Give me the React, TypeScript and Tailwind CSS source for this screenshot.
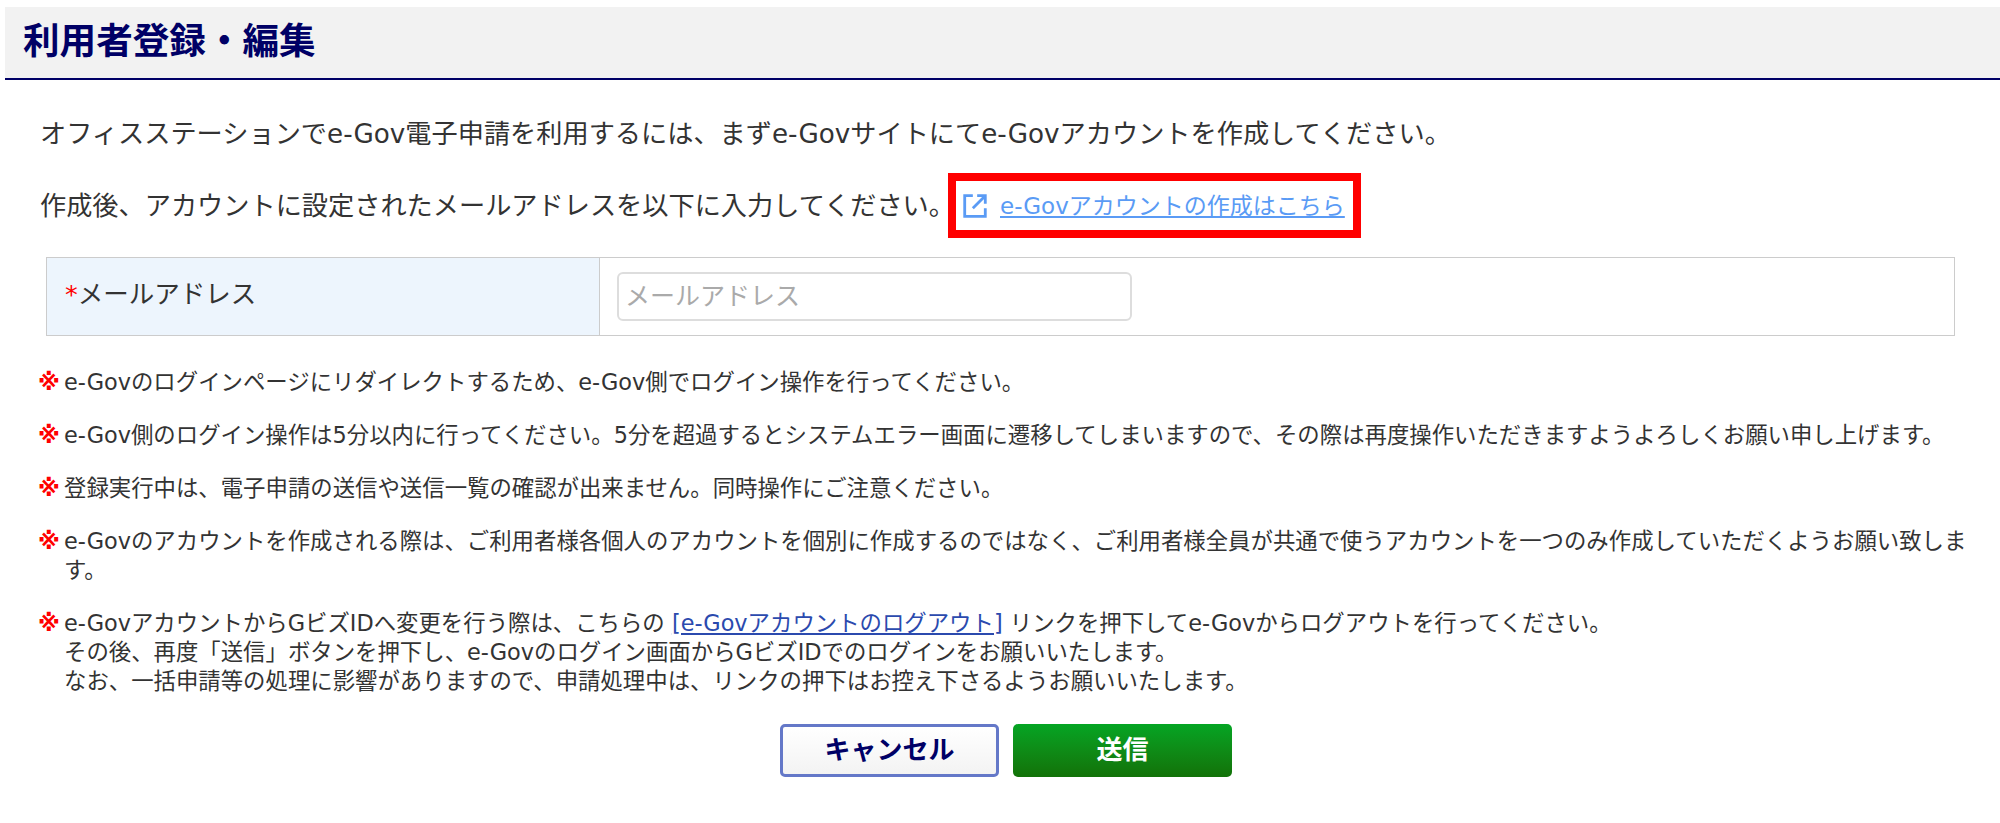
function Note({ children }: { children: React.ReactNode }) {
  return (
    <div className="flex text-[22.4px] leading-[29px] text-[#333]">
      <span className="w-[26px] shrink-0 font-bold text-[#f00]">※</span>
      <div>{children}</div>
    </div>
  );
}

export default function App() {
  return (
    <div className="min-h-[823px] bg-white pl-[5px] pt-[7px] font-['DejaVu_Sans','Noto_Sans_CJK_JP',sans-serif] text-[#333]">
      <div className="flex h-[73px] items-center border-b-2 border-[#000066] bg-[#f2f2f2] pl-[18px]">
        <h1 className="text-[36.6px] font-bold leading-none text-[#000066]">利用者登録・編集</h1>
      </div>
      <div className="pl-[35px] pt-[35px] text-[26.2px] leading-[38px]">
        <p>オフィスステーションでe-Gov電子申請を利用するには、まずe-Govサイトにてe-Govアカウントを作成してください。</p>
        <div className="mt-[20px] flex items-center">
          <p className="w-[908px] whitespace-nowrap">作成後、アカウントに設定されたメールアドレスを以下に入力してください。</p>
          <a className="flex h-[65px] w-[413px] items-center border-[8px] border-[#f00] pl-[6px] text-[23px] text-[#5a9bf5]">
            <svg width="26" height="26" viewBox="0 0 24 24" fill="none" stroke="currentColor" strokeWidth="2.6">
              <path d="M10 2.5H2.5v19h19V14M14 2.5h7.5V10M21.5 2.5 10 14" />
            </svg>
            <span className="ml-[12px] underline">e-Govアカウントの作成はこちら</span>
          </a>
        </div>
      </div>
      <div className="ml-[41px] mr-[45px] mt-[19px] flex h-[79px] border border-[#ccc]">
        <div className="flex w-[553px] items-center border-r border-[#ccc] bg-[#edf5fd] pb-[5px] pl-[18px] text-[25.5px]">
          <span className="text-[#f00]">*</span>メールアドレス
        </div>
        <div className="flex flex-1 items-center pl-[17px]">
          <input placeholder="メールアドレス" className="h-[49px] w-[515px] rounded-[6px] border-2 border-[#ddd] px-[6px] text-[25px] placeholder:text-[#aaa]" />
        </div>
      </div>
      <div className="flex flex-col gap-[24px] pl-[33px] pr-[32px] pt-[32px]">
        <Note>e-Govのログインページにリダイレクトするため、e-Gov側でログイン操作を行ってください。</Note>
        <Note>e-Gov側のログイン操作は5分以内に行ってください。5分を超過するとシステムエラー画面に遷移してしまいますので、その際は再度操作いただきますようよろしくお願い申し上げます。</Note>
        <Note>登録実行中は、電子申請の送信や送信一覧の確認が出来ません。同時操作にご注意ください。</Note>
        <Note>e-Govのアカウントを作成される際は、ご利用者様各個人のアカウントを個別に作成するのではなく、ご利用者様全員が共通で使うアカウントを一つのみ作成していただくようお願い致します。</Note>
        <Note>
          e-GovアカウントからGビズIDへ変更を行う際は、こちらの <a className="text-[#2b4aae] underline">[e-Govアカウントのログアウト]</a> リンクを押下してe-Govからログアウトを行ってください。
          <br />その後、再度「送信」ボタンを押下し、e-Govのログイン画面からGビズIDでのログインをお願いいたします。
          <br />なお、一括申請等の処理に影響がありますので、申請処理中は、リンクの押下はお控え下さるようお願いいたします。
        </Note>
      </div>
      <div className="mt-[28px] flex gap-[14px] pl-[775px]">
        <button className="h-[53px] w-[219px] rounded-[5px] border-[3px] border-[#6478c8] bg-gradient-to-b from-white to-[#f3f3f3] text-[26px] font-bold text-[#000066]">キャンセル</button>
        <button className="h-[53px] w-[219px] rounded-[5px] bg-gradient-to-b from-[#04a524] to-[#127208] text-[26px] font-bold text-white">送信</button>
      </div>
    </div>
  );
}
